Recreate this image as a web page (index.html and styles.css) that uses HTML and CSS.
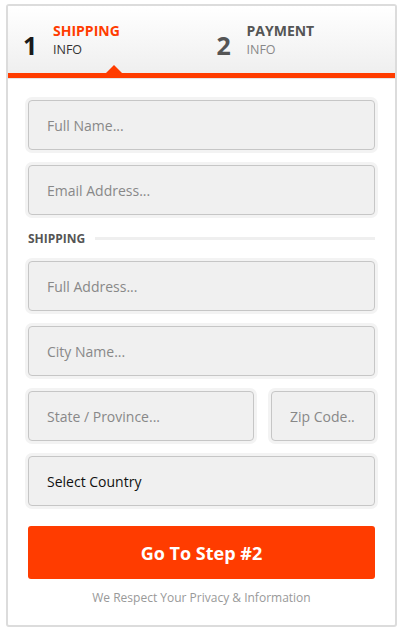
FILE: index.html
```html
<!DOCTYPE html>
<html lang="en">
<head>
<meta charset="utf-8">
<title>Checkout</title>
<link rel="stylesheet" href="styles.css">
</head>
<body>
<div class="card">
  <div class="steps">
    <div class="step active">
      <span class="num">1</span>
      <div class="labels"><span class="title">SHIPPING</span><span class="sub">INFO</span></div>
    </div>
    <div class="step">
      <span class="num">2</span>
      <div class="labels"><span class="title">PAYMENT</span><span class="sub">INFO</span></div>
    </div>
  </div>
  <form class="form">
    <input class="field" type="text" placeholder="Full Name...">
    <input class="field" type="text" placeholder="Email Address...">
    <div class="section"><span>SHIPPING</span><i class="rule"></i></div>
    <input class="field" type="text" placeholder="Full Address...">
    <input class="field" type="text" placeholder="City Name...">
    <div class="row">
      <input class="field state" type="text" placeholder="State / Province...">
      <input class="field zip" type="text" placeholder="Zip Code..">
    </div>
    <select class="field select"><option>Select Country</option></select>
    <button type="button" class="btn">Go To Step #2</button>
    <p class="note">We Respect Your Privacy &amp; Information</p>
  </form>
</div>
</body>
</html>
```
FILE: styles.css
```css
* { box-sizing: border-box; }
body {
  margin: 0;
  padding: 4px 8px 0 6px;
  font-family: "Open Sans", "DejaVu Sans", sans-serif;
  background: #fff;
}
.card {
  width: 391px;
  height: 623px;
  border: 2px solid #dcdcdc;
  border-radius: 3px;
  background: #fff;
  overflow: hidden;
}
.steps {
  position: relative;
  display: grid;
  grid-template-columns: 1fr 1fr;
  height: 72px;
  background: linear-gradient(#ffffff, #efefef);
  border-bottom: 5px solid #ff3c00;
  box-shadow: 0 1px 0 #e6e6e6;
}
.steps::after {
  content: "";
  position: absolute;
  left: 98px;
  bottom: 0;
  border-left: 8px solid transparent;
  border-right: 8px solid transparent;
  border-bottom: 8px solid #ff3c00;
}
.step {
  display: flex;
  align-items: flex-start;
  padding: 15px 0 0 15px;
}
.num {
  font-size: 25px;
  font-weight: 700;
  line-height: 34px;
  margin-top: 7px;
  width: 30px;
  color: #555;
}
.step.active .num { color: #1a1a1a; }
.labels { display: flex; flex-direction: column; }
.title {
  font-size: 14px;
  font-weight: 700;
  line-height: 20px;
  color: #555;
}
.step.active .title { color: #ff3c00; }
.sub {
  font-size: 12.5px;
  line-height: 18px;
  color: #888;
}
.step.active .sub { color: #333; }
.form {
  display: flex;
  flex-direction: column;
  gap: 15px;
  padding: 22px 20px 0 20px;
  margin: 0;
}
.field {
  display: block;
  width: 100%;
  height: 50px;
  margin: 0;
  padding: 0 18px;
  border: 1px solid #c6c6c6;
  border-radius: 4px;
  background: #f0f0f0;
  box-shadow: 0 0 0 3px #f3f3f3;
  font-family: "Open Sans", "DejaVu Sans", sans-serif;
  font-size: 14px;
  color: #222;
  outline: none;
}
.field::placeholder { color: #888; opacity: 1; }
.select {
  appearance: none;
  -webkit-appearance: none;
  color: #111;
}
.section {
  display: flex;
  align-items: center;
  gap: 10px;
  height: 16px;
  font-size: 12px;
  font-weight: 700;
  color: #555;
}
.rule {
  flex: 1;
  height: 3px;
  background: #efefef;
}
.row {
  display: flex;
  gap: 17px;
}
.state { flex: 1; width: auto; }
.zip { width: 104px; flex: none; }
.btn {
  margin-top: 5px;
  height: 53px;
  width: 100%;
  border: 0;
  border-radius: 3px;
  background: #ff3c00;
  color: #fff;
  font-family: "Open Sans", "DejaVu Sans", sans-serif;
  font-size: 18px;
  font-weight: 700;
  cursor: pointer;
}
.note {
  margin: -5px 0 0;
  text-align: center;
  font-size: 12px;
  line-height: 17px;
  color: #999;
}
```
